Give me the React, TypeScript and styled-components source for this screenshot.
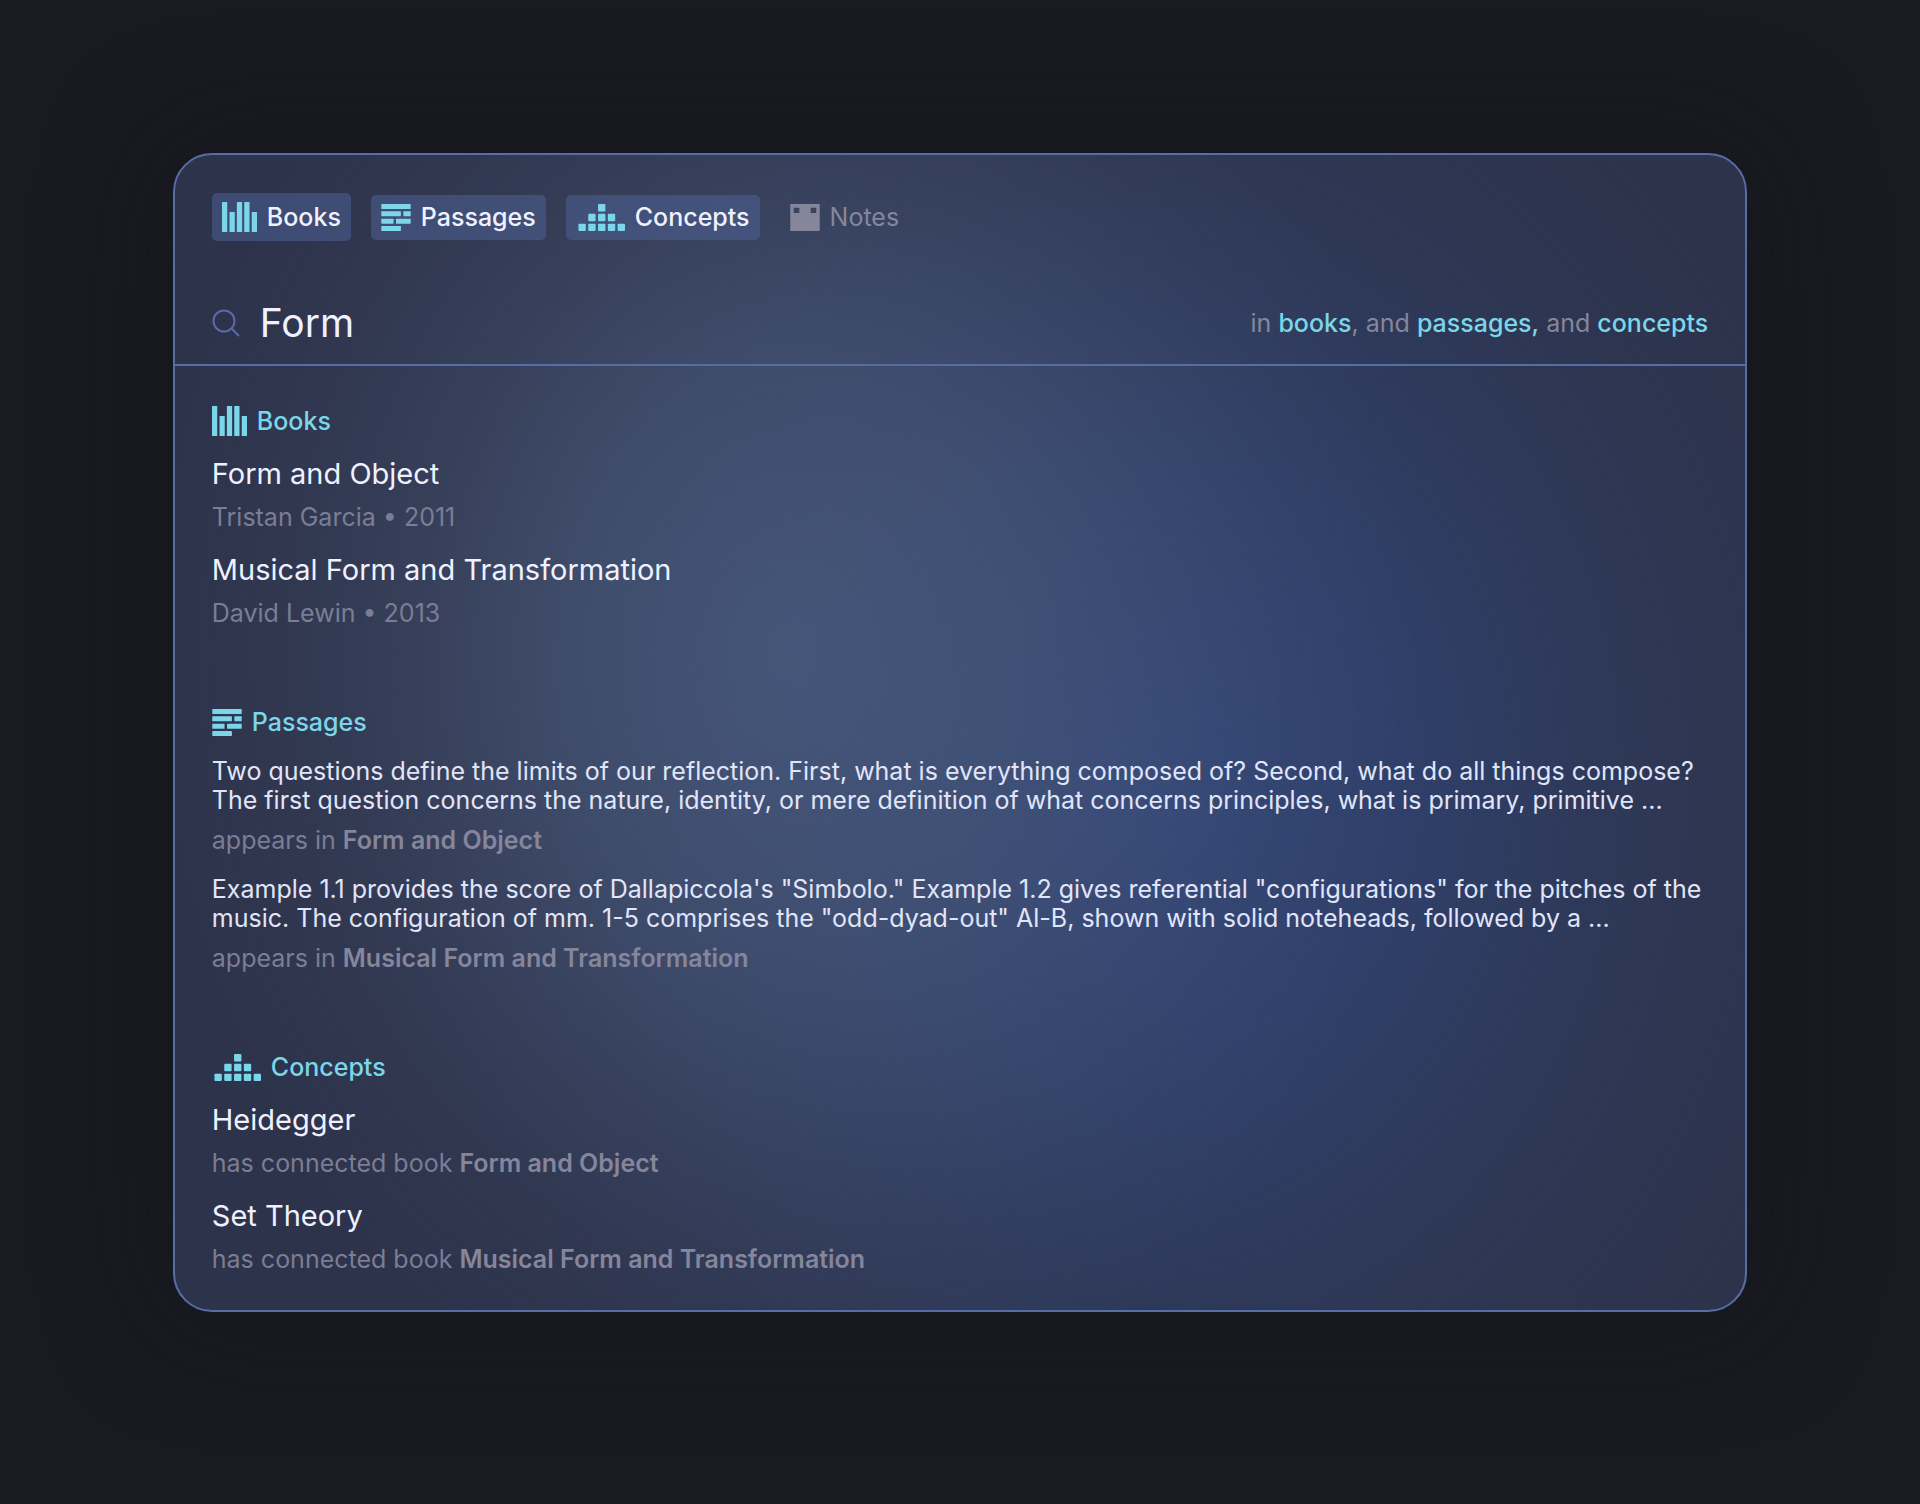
import React, { useState } from "react";
import styled, { createGlobalStyle } from "styled-components";

const color = {
  page: "#1a1a22",
  line: "#586ca6",
  accent: "#7cd6ea",
  text: "#eff1ff",
  body: "#e0e5fa",
  muted: "#7b7d94",
  off: "#85869b",
};

const GlobalStyle = createGlobalStyle`
  * { box-sizing: border-box; }
  body {
    margin: 0;
    background: ${color.page};
    font-family: Inter, "Liberation Sans", sans-serif;
    -webkit-font-smoothing: antialiased;
  }
`;

const Page = styled.main`
  min-height: 100vh;
  padding: 153px 9% 160px;
`;

const Panel = styled.div`
  border: 2px solid ${color.line};
  border-radius: 39px;
  overflow: hidden;
  background:
    radial-gradient(ellipse 40% 68% at 39% 43%, rgba(74, 91, 126, 0.82) 0%, rgba(74, 90, 122, 0.6) 36%, rgba(74, 88, 118, 0.33) 60%, rgba(74, 86, 114, 0.13) 80%, rgba(74, 86, 114, 0) 100%),
    radial-gradient(ellipse 46% 72% at 61% 54%, rgba(49, 71, 126, 0.92) 0%, rgba(49, 71, 124, 0.64) 36%, rgba(48, 70, 120, 0.36) 60%, rgba(47, 68, 114, 0.16) 80%, rgba(46, 66, 110, 0) 100%),
    #2d334b;
  box-shadow: 0 0 120px rgba(18, 18, 24, 0.5);
`;

const Header = styled.header`
  border-bottom: 2px solid ${color.line};
`;

const Filters = styled.div`
  display: flex;
  align-items: center;
  gap: 20px;
  padding: 38px 37px 0;
`;

const Chip = styled.button<{ $on: boolean }>`
  display: flex;
  align-items: center;
  gap: 10px;
  padding: 9px 10px;
  border: 0;
  border-radius: 5px;
  background: ${(p) => (p.$on ? "rgba(80, 99, 154, 0.5)" : "transparent")};
  color: ${(p) => (p.$on ? color.text : color.off)};
  font: 500 25px/25px Inter, "Liberation Sans", sans-serif;
  font-weight: ${(p) => (p.$on ? 500 : 400)};
  cursor: pointer;

  svg {
    color: ${(p) => (p.$on ? color.accent : color.off)};
  }
`;

const IconBox = styled.svg`
  display: block;
  flex: none;
  fill: currentColor;
`;

const SearchRow = styled.div`
  display: flex;
  align-items: center;
  gap: 20px;
  padding: 58px 37px 17px;
`;

const SearchLabel = styled.label`
  display: flex;
  flex: 1;
  align-items: center;
  gap: 20px;
  min-width: 0;
  color: ${color.line};
`;

const SearchInput = styled.input`
  flex: 1;
  min-width: 0;
  height: 48px;
  padding: 0;
  border: 0;
  outline: 0;
  background: transparent;
  color: ${color.text};
  font: 400 39px/48px Inter, "Liberation Sans", sans-serif;
`;

const Scope = styled.p`
  margin: 0;
  color: ${color.off};
  font-size: 25px;
  line-height: 30px;

  b {
    color: ${color.accent};
    font-weight: 500;
  }
`;

const Results = styled.div`
  display: flex;
  flex-direction: column;
  gap: 79px;
  padding: 40px 37px 36px;
`;

const Section = styled.section`
  display: flex;
  flex-direction: column;
  gap: 20px;
`;

const SectionTitle = styled.h2`
  display: flex;
  align-items: center;
  gap: 10px;
  height: 30px;
  margin: 0;
  color: ${color.accent};
  font-size: 25px;
  font-weight: 500;
  line-height: 30px;
`;

const Entry = styled.article`
  display: flex;
  flex-direction: column;
  gap: 10px;
`;

const EntryTitle = styled.h3`
  margin: 0;
  color: ${color.text};
  font-size: 29px;
  font-weight: 400;
  line-height: 36px;
`;

const Passage = styled.p`
  margin: 0;
  color: ${color.body};
  font-size: 25px;
  line-height: 29px;
`;

const Meta = styled.p`
  margin: 0;
  color: ${color.muted};
  font-size: 25px;
  line-height: 30px;

  b {
    color: ${color.off};
    font-weight: 600;
  }
`;

const BooksIcon = () => (
  <IconBox width="35" height="30" viewBox="0 0 14 12" aria-hidden="true">
    <rect x="0" y="0" width="2.1" height="12" rx="0.2" />
    <rect x="3" y="4" width="2.1" height="8" rx="0.2" />
    <rect x="5.95" y="0" width="2.1" height="12" rx="0.2" />
    <rect x="8.9" y="0" width="2.1" height="12" rx="0.2" />
    <rect x="11.9" y="4" width="2.1" height="8" rx="0.2" />
  </IconBox>
);

const PassagesIcon = () => (
  <IconBox width="30" height="27" viewBox="0 0 12 11" aria-hidden="true">
    <rect x="0" y="0" width="12" height="2" rx="0.2" />
    <rect x="0" y="3" width="8" height="2" rx="0.2" />
    <rect x="9" y="3" width="3" height="2" rx="0.2" />
    <rect x="0" y="6" width="5" height="2" rx="0.2" />
    <rect x="6" y="6" width="6" height="2" rx="0.2" />
    <rect x="0" y="9" width="8" height="2" rx="0.2" />
  </IconBox>
);

const blocks = [
  [9, 0],
  [5, 4], [9, 4], [13, 4],
  [1, 8], [5, 8], [9, 8], [13, 8], [17, 8],
];

const ConceptsIcon = () => (
  <IconBox width="49" height="27" viewBox="0 0 20 11" aria-hidden="true">
    {blocks.map(([x, y]) => (
      <rect key={`${x}-${y}`} x={x} y={y} width="3" height="3" rx="0.4" />
    ))}
  </IconBox>
);

const NotesIcon = () => (
  <IconBox width="30" height="27" viewBox="0 0 12 11" aria-hidden="true">
    <path fillRule="evenodd" d="M0 0H12V11H0ZM1.4 1.5V3.7H3.7V1.5ZM8.3 1.5V3.7H10.6V1.5Z" />
  </IconBox>
);

const SearchIcon = () => (
  <IconBox width="28" height="28" viewBox="0 0 28 28" aria-hidden="true">
    <g fill="none" stroke="currentColor" strokeWidth="2">
      <circle cx="12" cy="12" r="10.5" />
      <path d="M19.5 19.5L27 27" />
    </g>
  </IconBox>
);

const filters = [
  { name: "Books", Icon: BooksIcon },
  { name: "Passages", Icon: PassagesIcon },
  { name: "Concepts", Icon: ConceptsIcon },
  { name: "Notes", Icon: NotesIcon },
];

const books = [
  { title: "Form and Object", meta: "Tristan Garcia • 2011" },
  { title: "Musical Form and Transformation", meta: "David Lewin • 2013" },
];

const passages = [
  {
    text: "Two questions define the limits of our reflection. First, what is everything composed of? Second, what do all things compose? The first question concerns the nature, identity, or mere definition of what concerns principles, what is primary, primitive ...",
    book: "Form and Object",
  },
  {
    text: 'Example 1.1 provides the score of Dallapiccola\'s "Simbolo." Example 1.2 gives referential "configurations" for the pitches of the music. The configuration of mm. 1-5 comprises the "odd-dyad-out" Al-B, shown with solid noteheads, followed by a ...',
    book: "Musical Form and Transformation",
  },
];

const concepts = [
  { title: "Heidegger", book: "Form and Object" },
  { title: "Set Theory", book: "Musical Form and Transformation" },
];

export default function App() {
  const [query, setQuery] = useState("Form");
  const [active, setActive] = useState(["Books", "Passages", "Concepts"]);

  const toggle = (name: string) =>
    setActive((list) =>
      list.includes(name) ? list.filter((n) => n !== name) : [...list, name]
    );

  return (
    <>
      <GlobalStyle />
      <Page>
        <Panel>
          <Header>
            <Filters>
              {filters.map(({ name, Icon }) => (
                <Chip
                  key={name}
                  type="button"
                  $on={active.includes(name)}
                  aria-pressed={active.includes(name)}
                  onClick={() => toggle(name)}
                >
                  <Icon />
                  {name}
                </Chip>
              ))}
            </Filters>
            <SearchRow>
              <SearchLabel>
                <SearchIcon />
                <SearchInput
                  type="text"
                  aria-label="Search"
                  value={query}
                  onChange={(e) => setQuery(e.target.value)}
                />
              </SearchLabel>
              <Scope>
                in <b>books</b>, and <b>passages,</b> and <b>concepts</b>
              </Scope>
            </SearchRow>
          </Header>
          <Results>
            <Section>
              <SectionTitle>
                <BooksIcon />
                Books
              </SectionTitle>
              {books.map((b) => (
                <Entry key={b.title}>
                  <EntryTitle>{b.title}</EntryTitle>
                  <Meta>{b.meta}</Meta>
                </Entry>
              ))}
            </Section>
            <Section>
              <SectionTitle>
                <PassagesIcon />
                Passages
              </SectionTitle>
              {passages.map((p) => (
                <Entry key={p.book}>
                  <Passage>{p.text}</Passage>
                  <Meta>
                    appears in <b>{p.book}</b>
                  </Meta>
                </Entry>
              ))}
            </Section>
            <Section>
              <SectionTitle>
                <ConceptsIcon />
                Concepts
              </SectionTitle>
              {concepts.map((c) => (
                <Entry key={c.title}>
                  <EntryTitle>{c.title}</EntryTitle>
                  <Meta>
                    has connected book <b>{c.book}</b>
                  </Meta>
                </Entry>
              ))}
            </Section>
          </Results>
        </Panel>
      </Page>
    </>
  );
}
